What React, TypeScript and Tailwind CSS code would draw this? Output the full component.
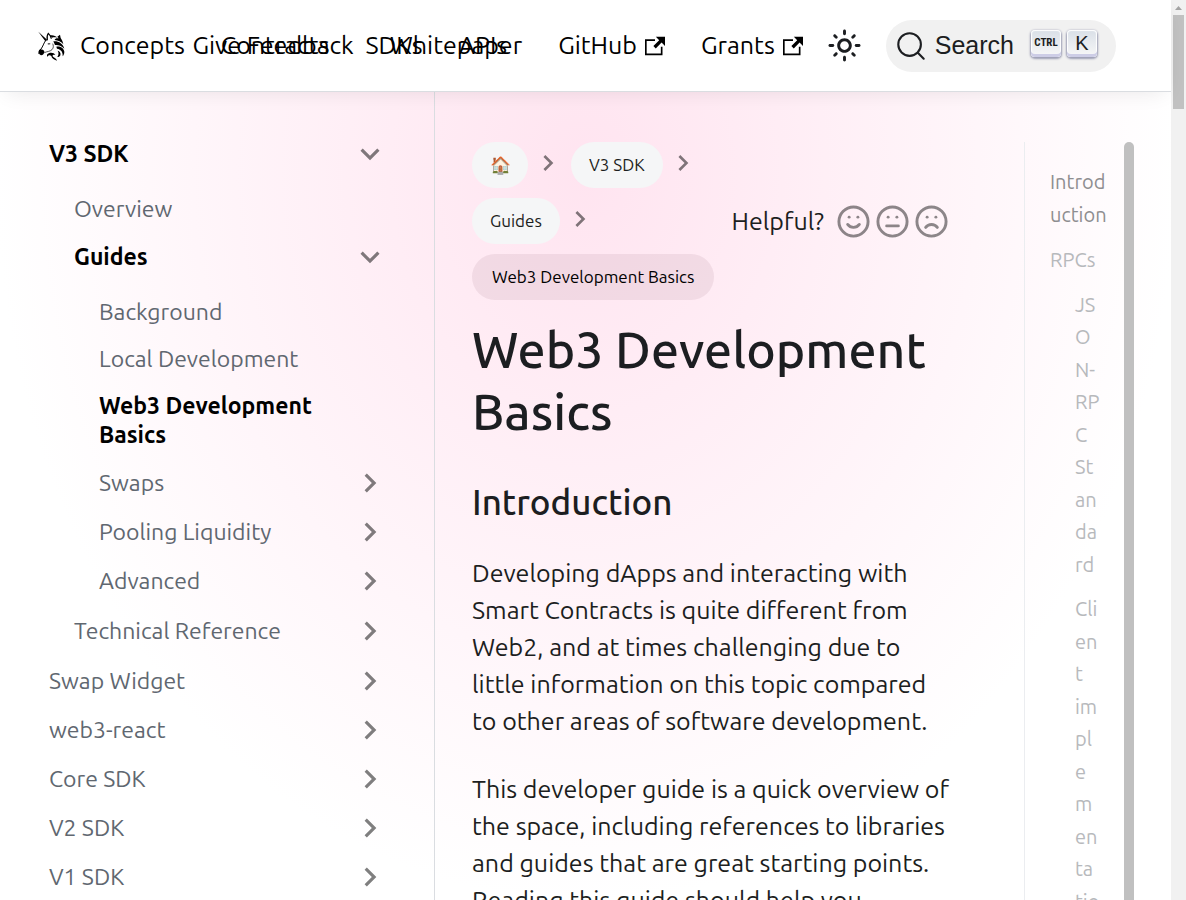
import type { ReactNode } from "react";
import { Frown, Meh, Smile } from "lucide-react";

type SidebarEntry = {
  label: string;
  active?: boolean;
  category?: boolean;
  children?: SidebarEntry[];
};

const sidebar: SidebarEntry[] = [
  {
    label: "V3 SDK",
    active: true,
    category: true,
    children: [
      { label: "Overview" },
      {
        label: "Guides",
        active: true,
        category: true,
        children: [
          { label: "Background" },
          { label: "Local Development" },
          { label: "Web3 Development Basics", active: true },
          { label: "Swaps", category: true },
          { label: "Pooling Liquidity", category: true },
          { label: "Advanced", category: true },
        ],
      },
      { label: "Technical Reference", category: true },
    ],
  },
  { label: "Swap Widget", category: true },
  { label: "web3-react", category: true },
  { label: "Core SDK", category: true },
  { label: "V2 SDK", category: true },
  { label: "V1 SDK", category: true },
];

function UnicornLogo() {
  return (
    <svg viewBox="0 0 84 90" className="h-[30px] w-7 flex-none" aria-hidden="true">
      <path d="M1 2 L28 27 L22 31 Z" fill="#000" />
      <path d="M28 28 C26 18 27 12 31 7 C36 12 40 17 40 23" fill="none" stroke="#000" strokeWidth="3.5" />
      <path d="M22 30 C17 37 15 46 9 54 C3 60 2 64 3 69" fill="none" stroke="#000" strokeWidth="3" />
      <path d="M3 57 C9 54 17 56 19 61 C20 67 15 73 9 73 C3 71 1 64 3 57 Z" fill="#000" />
      <path d="M19 65 C27 61 36 62 42 56 C48 50 46 42 44 38" fill="none" stroke="#000" strokeWidth="2" />
      <path d="M28 39 C31 36 35 36 38 39 C34 41 31 41 28 39 Z" fill="#000" />
      <path d="M36 13 C44 11 53 14 59 20 C54 19 48 18 42 20 Z" fill="#000" />
      <path d="M58 17 L66 11 L68 21 C72 27 75 33 76 40 C70 32 60 28 50 27 C51 23 55 21 62 22 Z" fill="#000" />
      <path d="M46 31 C60 29 75 37 79 53 C70 44 60 41 51 42 Z" fill="#000" />
      <path d="M55 47 C66 45 77 51 79 62 C79 68 77 72 74 76 C75 64 70 55 57 53 Z" fill="#000" />
      <path d="M59 59 C66 61 70 68 66 75 C63 78 60 78 58 78 C62 72 63 65 59 59 Z" fill="#000" />
      <path d="M27 71 C34 62 48 64 52 72 C44 69 41 74 47 79 C52 82 56 85 57 89 C47 86 41 82 40 75 C36 71 31 72 27 78 Z" fill="#000" />
    </svg>
  );
}

function ExternalIcon() {
  return (
    <svg viewBox="0 0 24 24" className="ml-2 size-5 flex-none" fill="currentColor" aria-hidden="true">
      <path d="M21 13v10h-21v-19h12v2h-10v15h17v-8h2zm3-12h-10.988l4.035 4-6.977 7.07 2.828 2.828 6.977-7.07 4.125 4.172v-11z" />
    </svg>
  );
}

function SunIcon() {
  return (
    <svg viewBox="0 0 24 24" className="size-[35px]" fill="currentColor" aria-hidden="true">
      <path d="M12,9c1.65,0,3,1.35,3,3s-1.35,3-3,3s-3-1.35-3-3S10.35,9,12,9 M12,7c-2.76,0-5,2.24-5,5s2.24,5,5,5s5-2.24,5-5 S14.76,7,12,7L12,7z M2,13l2,0c0.55,0,1-0.45,1-1s-0.45-1-1-1l-2,0c-0.55,0-1,0.45-1,1S1.45,13,2,13z M20,13l2,0c0.55,0,1-0.45,1-1 s-0.45-1-1-1l-2,0c-0.55,0-1,0.45-1,1S19.45,13,20,13z M11,2v2c0,0.55,0.45,1,1,1s1-0.45,1-1V2c0-0.55-0.45-1-1-1S11,1.45,11,2z M11,20v2c0,0.55,0.45,1,1,1s1-0.45,1-1v-2c0-0.55-0.45-1-1-1C11.45,19,11,19.45,11,20z M5.99,4.58c-0.39-0.39-1.03-0.39-1.41,0 c-0.39,0.39-0.39,1.03,0,1.41l1.06,1.06c0.39,0.39,1.03,0.39,1.41,0s0.39-1.03,0-1.41L5.99,4.58z M18.36,16.95 c-0.39-0.39-1.03-0.39-1.41,0c-0.39,0.39-0.39,1.03,0,1.41l1.06,1.06c0.39,0.39,1.03,0.39,1.41,0c0.39-0.39,0.39-1.03,0-1.41 L18.36,16.95z M19.42,5.99c0.39-0.39,0.39-1.03,0-1.41c-0.39-0.39-1.03-0.39-1.41,0l-1.06,1.06c-0.39,0.39-0.39,1.03,0,1.41 s1.03,0.39,1.41,0L19.42,5.99z M7.05,18.36c0.39-0.39,0.39-1.03,0-1.41c-0.39-0.39-1.03-0.39-1.41,0l-1.06,1.06 c-0.39,0.39-0.39,1.03,0,1.41s1.03,0.39,1.41,0L7.05,18.36z" />
    </svg>
  );
}

function SearchIcon() {
  return (
    <svg viewBox="0 0 20 20" className="size-[30px] flex-none" aria-hidden="true">
      <path
        d="M14.386 14.386l4.0877 4.0877-4.0877-4.0877c-2.9418 2.9419-7.7115 2.9419-10.6533 0-2.9419-2.9418-2.9419-7.7115 0-10.6533 2.9418-2.9419 7.7115-2.9419 10.6533 0 2.9419 2.9418 2.9419 7.7115 0 10.6533z"
        fill="none"
        stroke="currentColor"
        strokeWidth="1.4"
        strokeLinecap="round"
        strokeLinejoin="round"
      />
    </svg>
  );
}

function Chevron({ className }: { className: string }) {
  return (
    <svg viewBox="0 0 24 24" className={className} fill="currentColor" aria-hidden="true">
      <path d="M7.41 15.41L12 10.83l4.59 4.58L18 14l-6-6-6 6z" />
    </svg>
  );
}

function NavLink({ children, external }: { children: ReactNode; external?: boolean }) {
  return (
    <a href="#" className="flex flex-none items-center px-[18px] whitespace-nowrap text-black">
      {children}
      {external && <ExternalIcon />}
    </a>
  );
}

function Header() {
  return (
    <header className="relative z-10 flex h-[92px] flex-none items-center border-b border-[#dadde1] bg-white pr-[55px] pl-[38px] text-[25px] leading-[37px] shadow-[0_6px_20px_-6px_rgba(0,0,0,0.09)]">
      <nav aria-label="Main" className="flex min-w-0 flex-1 items-center">
        <a href="#" aria-label="Home" className="-mr-1 flex-none">
          <UnicornLogo />
        </a>
        <NavLink>Concepts</NavLink>
        <NavLink>Contracts</NavLink>
        <NavLink>SDKs</NavLink>
        <NavLink>APIs</NavLink>
      </nav>
      <div className="flex flex-none items-center">
        <NavLink>Give Feedback</NavLink>
        <NavLink>Whitepaper</NavLink>
        <NavLink external>GitHub</NavLink>
        <NavLink external>Grants</NavLink>
        <button type="button" aria-label="Switch colour mode" className="mr-[17px] flex size-12 items-center justify-center text-[#1c1e21]">
          <SunIcon />
        </button>
        <button
          type="button"
          className="flex h-[52px] items-center rounded-full bg-[#f1f1f1] pr-[19px] pl-[10px] font-['Liberation_Sans',sans-serif] text-[#1c1e21]"
        >
          <SearchIcon />
          <span className="mr-[17px] ml-[9px]">Search</span>
          <span className="mb-1 flex gap-[6px] leading-none">
            <kbd className="flex h-[27px] w-[30px] items-center justify-center rounded-[4px] bg-linear-to-b from-[#d9dfe7] to-[#f8f8f8] pb-0.5 font-['Ubuntu_Condensed','Liberation_Sans_Narrow','Roboto_Condensed',sans-serif] text-[11px] font-bold shadow-[inset_0_-3px_0_0_#cdcde6,inset_0_0_1px_1px_#fff,0_1px_2px_1px_rgba(30,35,90,0.4)]">
              CTRL
            </kbd>
            <kbd className="flex h-[27px] w-[30px] items-center justify-center rounded-[4px] bg-linear-to-b from-[#d9dfe7] to-[#f8f8f8] pb-0.5 font-['Liberation_Sans',sans-serif] text-[20px] shadow-[inset_0_-3px_0_0_#cdcde6,inset_0_0_1px_1px_#fff,0_1px_2px_1px_rgba(30,35,90,0.4)]">
              K
            </kbd>
          </span>
        </button>
      </div>
    </header>
  );
}

function SidebarList({ items, nested }: { items: SidebarEntry[]; nested?: boolean }) {
  return (
    <ul className={nested ? "mt-[7px] mb-px pl-[25px]" : ""}>
      {items.map((item) => (
        <li key={item.label}>
          <a
            href="#"
            className={[
              "flex items-center justify-between",
              item.category ? "py-2.5" : "py-[9px] pr-11",
              item.active ? "font-bold text-black" : "text-[#606770]",
            ].join(" ")}
          >
            <span>{item.label}</span>
            {item.category && (
              <Chevron
                className={
                  item.children
                    ? "-my-2 size-[38px] flex-none rotate-180 text-black/50"
                    : "-my-2 size-[38px] flex-none rotate-90 text-black/50"
                }
              />
            )}
          </a>
          {item.children && <SidebarList items={item.children} nested />}
        </li>
      ))}
    </ul>
  );
}

function Crumb({ children, last }: { children: ReactNode; last?: boolean }) {
  return (
    <li className="flex items-center">
      <a
        href="#"
        className={
          last
            ? "flex h-[46px] items-center rounded-full bg-[#430a2d]/7 px-5 pb-0.5 text-black"
            : "flex h-[46px] items-center rounded-full bg-[#f5f6f7] px-[18px] pb-0.5 text-[#1c1e21]"
        }
      >
        {children}
      </a>
      {!last && <Chevron className="mr-[7px] mb-1 ml-1 size-8 flex-none rotate-90 text-black/50" />}
    </li>
  );
}

function Article() {
  return (
    <article className="min-w-0 flex-1">
      <div className="flex items-center">
        <nav aria-label="Breadcrumbs" className="min-w-0 flex-1">
          <ul className="flex flex-wrap gap-y-2.5 text-[17px]">
            <Crumb>
              <span className="w-5 text-center">🏠</span>
            </Crumb>
            <Crumb>V3 SDK</Crumb>
            <Crumb>Guides</Crumb>
            <Crumb last>Web3 Development Basics</Crumb>
          </ul>
        </nav>
        <div className="flex flex-none items-center gap-1 text-[#1c1e21]">
          <span className="mr-2">Helpful?</span>
          <button type="button" aria-label="Helpful" className="text-black/45">
            <Smile className="size-[35px]" />
          </button>
          <button type="button" aria-label="Somewhat helpful" className="text-black/45">
            <Meh className="size-[35px]" />
          </button>
          <button type="button" aria-label="Not helpful" className="text-black/45">
            <Frown className="size-[35px]" />
          </button>
        </div>
      </div>
      <h1 className="mt-[18px] text-[50px] leading-[62px] font-medium">Web3 Development Basics</h1>
      <h2 className="mt-[37px] text-[35px] leading-[46px] font-medium">Introduction</h2>
      <p className="mt-[30px]">
        Developing dApps and interacting with Smart Contracts is quite different from Web2, and at times challenging due
        to little information on this topic compared to other areas of software development.
      </p>
      <p className="mt-[31px]">
        This developer guide is a quick overview of the space, including references to libraries and guides that are
        great starting points. Reading this guide should help you
      </p>
    </article>
  );
}

function TableOfContents() {
  return (
    <aside className="flex w-[110px] flex-none">
      <ul className="flex min-w-0 flex-1 flex-col gap-[13px] border-l border-[#ebedf0] pt-6 pr-[17px] pl-[25px] text-xl leading-relaxed break-words text-[#b7b9bc]">
        <li>
          <a href="#" className="text-[#8e8e90]">
            Introduction
          </a>
        </li>
        <li>
          <a href="#">RPCs</a>
          <ul className="mt-3 flex flex-col gap-3 pr-[6px] pl-[25px]">
            <li>
              <a href="#">JSON-RPC Standard</a>
            </li>
            <li>
              <a href="#">
                Client implementa
                <wbr />
                tion
              </a>
            </li>
          </ul>
        </li>
      </ul>
      <div className="w-2.5 flex-none rounded-t-full bg-[#c0c0c0]" />
    </aside>
  );
}

function PageScrollbar() {
  return (
    <div className="flex w-[15px] flex-none flex-col items-center bg-[#f1f1f1]">
      <svg viewBox="0 0 15 15" className="size-[15px] flex-none" aria-hidden="true">
        <path d="M4 10h7L7.500 6z" fill="#a3a3a3" />
      </svg>
      <div className="h-[94px] w-[11px] bg-[#c1c1c1]" />
    </div>
  );
}

export default function App() {
  return (
    <div className="flex h-screen overflow-hidden bg-white font-[Ubuntu,'Open_Sans',sans-serif] text-[#1c1e21]">
      <div className="flex min-w-0 flex-1 flex-col">
        <Header />
        <div className="flex min-h-0 flex-1 overflow-hidden bg-[radial-gradient(590px_730px_at_50%_80px,#ffe4f0_0%,#ffffff_100%)]">
          <aside className="w-[435px] flex-none border-r border-[#dadde1] pt-[37px] pr-[45px] pl-[49px] text-[23px] leading-[29px]">
            <SidebarList items={sidebar} />
          </aside>
          <main className="flex min-w-0 flex-1 gap-[75px] pt-[50px] pr-[37px] pl-[37px] text-[25px] leading-[37px]">
            <Article />
            <TableOfContents />
          </main>
        </div>
      </div>
      <PageScrollbar />
    </div>
  );
}
